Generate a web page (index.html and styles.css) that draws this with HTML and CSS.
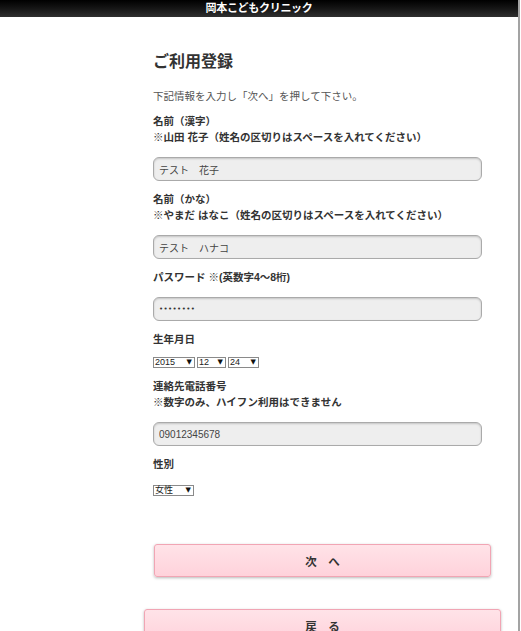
FILE: index.html
```html
<!DOCTYPE html>
<html lang="ja">
<head>
<meta charset="utf-8">
<title>ご利用登録 | 岡本こどもクリニック</title>
<link rel="stylesheet" href="styles.css">
</head>
<body>
<div class="page">
  <header class="topbar">
    <h1 class="topbar-title">岡本こどもクリニック</h1>
  </header>
  <main class="content">
    <form class="form">
      <h2 class="form-title">ご利用登録</h2>
      <p class="lead">下記情報を入力し「次へ」を押して下さい。</p>

      <div class="field">
        <label class="field-label" for="name-kanji">名前（漢字）<br>※山田 花子（姓名の区切りはスペースを入れてください）</label>
        <input class="text-input" id="name-kanji" type="text" value="テスト　花子">
      </div>

      <div class="field">
        <label class="field-label" for="name-kana">名前（かな）<br>※やまだ はなこ（姓名の区切りはスペースを入れてください）</label>
        <input class="text-input" id="name-kana" type="text" value="テスト　ハナコ">
      </div>

      <div class="field">
        <label class="field-label" for="password">パスワード ※(英数字4～8桁)</label>
        <input class="text-input text-input-password" id="password" type="password" value="12345678">
      </div>

      <div class="field">
        <div class="field-label">生年月日</div>
        <div class="select-row">
          <span class="select select-year"><span class="select-value">2015</span><span class="select-arrow">▼</span></span>
          <span class="select select-month"><span class="select-value">12</span><span class="select-arrow">▼</span></span>
          <span class="select select-day"><span class="select-value">24</span><span class="select-arrow">▼</span></span>
        </div>
      </div>

      <div class="field">
        <label class="field-label" for="tel">連絡先電話番号<br>※数字のみ、ハイフン利用はできません</label>
        <input class="text-input" id="tel" type="text" value="09012345678">
      </div>

      <div class="field">
        <div class="field-label">性別</div>
        <div class="select-row select-row-gender">
          <span class="select select-gender"><span class="select-value">女性</span><span class="select-arrow">▼</span></span>
        </div>
      </div>

      <button class="btn btn-next" type="button">次　へ</button>
    </form>
    <div class="back">
      <button class="btn btn-back" type="button">戻　る</button>
    </div>
  </main>
</div>
</body>
</html>
```
FILE: styles.css
```css
html, body {
  margin: 0;
  padding: 0;
  background: #fff;
}

body {
  font-family: "Liberation Sans", "Noto Sans CJK JP", sans-serif;
  color: #333;
  overflow: hidden;
}

.page {
  width: 518px;
  height: 100vh;
  border-right: 2px solid #a3a3a3;
  overflow: hidden;
}

.topbar {
  height: 17px;
  background: linear-gradient(#000 0%, #161616 50%, #2f2f2f 100%);
  display: flex;
  align-items: center;
  justify-content: center;
}

.topbar-title {
  margin: 0;
  font-size: 11px;
  line-height: 17px;
  font-weight: bold;
  color: #fff;
  letter-spacing: -0.3px;
  text-shadow: 0 0 1px rgba(0, 0, 0, 0.6);
}

.content {
  padding: 0;
}

.form {
  margin: 0 0 0 153px;
  width: 338px;
  display: flex;
  flex-direction: column;
  align-items: flex-start;
}

.form-title {
  margin: 35px 0 0;
  font-size: 16px;
  line-height: 20px;
  font-weight: bold;
  color: #333;
}

.lead {
  margin: 16px 0 0;
  font-size: 10.5px;
  line-height: 16px;
  color: #555;
}

.field {
  margin-top: 10px;
  display: flex;
  flex-direction: column;
  align-items: flex-start;
}

.lead + .field {
  margin-top: 9px;
}

.field-label {
  font-size: 10.5px;
  line-height: 16px;
  font-weight: bold;
  color: #333;
}

.text-input {
  box-sizing: border-box;
  margin: 12px 0 0;
  width: 329px;
  height: 24px;
  padding: 0 5px;
  border: 1px solid #aaa;
  border-radius: 6px;
  background: #eee;
  box-shadow: inset 0 1px 2px rgba(0, 0, 0, 0.18);
  font-family: "Liberation Sans", "Noto Sans CJK JP", sans-serif;
  font-size: 10px;
  color: #444;
  outline: none;
}

.text-input-password {
  font-family: "DejaVu Sans", sans-serif;
  font-size: 7px;
  letter-spacing: 0.4px;
  color: #333;
}

.select-row {
  margin-top: 10px;
  display: flex;
  gap: 2px;
}

.select-row-gender {
  margin-top: 13px;
}

.select {
  box-sizing: border-box;
  height: 11px;
  padding: 0 2px 0 1px;
  border: 1px solid #8a8a8a;
  background: #fff;
  display: flex;
  align-items: center;
  justify-content: space-between;
  font-size: 9px;
  line-height: 9px;
  color: #222;
}

.select-arrow {
  font-family: "DejaVu Sans", sans-serif;
  font-size: 7px;
  color: #111;
}

.select-year { width: 42px; }
.select-month { width: 29px; }
.select-day { width: 31px; }
.select-gender { width: 41px; }

.btn {
  box-sizing: border-box;
  height: 33px;
  border: 1px solid #f1a5b4;
  border-radius: 3px;
  background: linear-gradient(#ffe3e8, #ffd2db);
  box-shadow: 0 1px 3px rgba(0, 0, 0, 0.28);
  font-family: "Liberation Sans", "Noto Sans CJK JP", sans-serif;
  font-size: 11.5px;
  font-weight: bold;
  color: #333;
  cursor: pointer;
  padding: 0;
}

.btn-next {
  margin: 48px 0 0 1px;
  width: 337px;
}

.back {
  margin: 32px 0 0 144px;
}

.btn-back {
  width: 357px;
}
```
